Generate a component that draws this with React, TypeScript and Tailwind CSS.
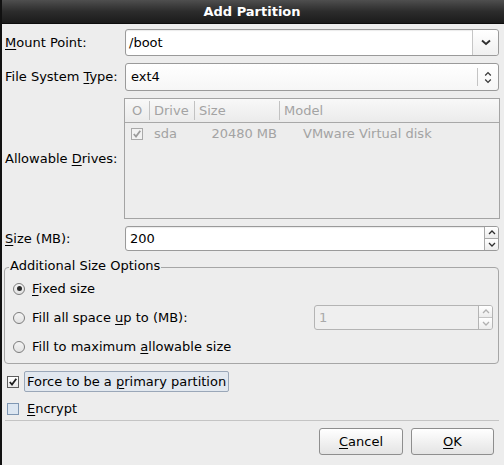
import React from "react";

const U = ({ c }: { c: string }) => (
  <span className="underline underline-offset-[2px] decoration-[1px]">{c}</span>
);

function ChevronDown({ color = "#2e2e2e" }: { color?: string }) {
  return (
    <svg width="10" height="7" viewBox="0 0 10 7">
      <polyline points="1,1.5 5,5 9,1.5" fill="none" stroke={color} strokeWidth="1.9" />
    </svg>
  );
}

function UpDown({ color = "#3a3a3a" }: { color?: string }) {
  return (
    <svg width="8" height="13" viewBox="0 0 8 13">
      <polyline points="1.2,4.5 4,1.6 6.8,4.5" fill="none" stroke={color} strokeWidth="1.3" />
      <polyline points="1.2,8.5 4,11.4 6.8,8.5" fill="none" stroke={color} strokeWidth="1.3" />
    </svg>
  );
}

function SmallUp({ color }: { color: string }) {
  return (
    <svg width="8" height="5" viewBox="0 0 8 5">
      <polyline points="1,4 4,1 7,4" fill="none" stroke={color} strokeWidth="1.3" />
    </svg>
  );
}
function SmallDown({ color }: { color: string }) {
  return (
    <svg width="8" height="5" viewBox="0 0 8 5">
      <polyline points="1,1 4,4 7,1" fill="none" stroke={color} strokeWidth="1.3" />
    </svg>
  );
}

function Check({ color }: { color: string }) {
  return (
    <svg width="10" height="10" viewBox="0 0 10 10">
      <polyline points="1.8,5 4,7.6 8.3,1.8" fill="none" stroke={color} strokeWidth="1.8" />
    </svg>
  );
}

function SpinButtons({ color, disabled }: { color: string; disabled?: boolean }) {
  return (
    <div className={`w-[14px] h-full flex flex-col border-l ${disabled ? "border-[#b4b4b4]" : "border-[#a8a8a8]"}`}>
      <div className="flex-1 flex items-center justify-center bg-gradient-to-b from-white to-[#ececec]">
        <SmallUp color={color} />
      </div>
      <div className={`h-px ${disabled ? "bg-[#c4c4c4]" : "bg-[#a8a8a8]"}`} />
      <div className="flex-1 flex items-center justify-center bg-gradient-to-b from-white to-[#ececec]">
        <SmallDown color={color} />
      </div>
    </div>
  );
}

function Radio({ checked }: { checked?: boolean }) {
  return (
    <div className="w-[12px] h-[12px] rounded-full border border-[#7c7c7c] bg-gradient-to-b from-[#f4f4f4] to-[#e2e2e2] flex items-center justify-center shrink-0">
      {checked && <div className="w-[5px] h-[5px] rounded-full bg-[#2b2b2b]" />}
    </div>
  );
}

export default function App() {
  return (
    <div className="w-[504px] h-[465px] bg-[#ededed] flex flex-col text-[13px] leading-[16px] text-black border-l-2 border-[#111] overflow-hidden font-['DejaVu_Sans','Liberation_Sans',sans-serif]">
      {/* Title bar */}
      <div className="h-[24px] -ml-[2px] w-[504px] bg-gradient-to-b from-[#4f4f4f] via-[#2c2c2c] to-[#1b1b1b] border-b border-[#0d0d0d] flex items-center justify-center shrink-0">
        <span className="text-white font-bold text-[13px] pt-[1px]">Add Partition</span>
      </div>

      <div className="flex flex-col pl-[3px] pr-[5px]">
        {/* Mount point */}
        <div className="mt-[5px] h-[27px] flex items-center">
          <div className="w-[120px]">
            <U c="M" />ount Point:
          </div>
          <div className="flex-1 h-full flex bg-white border border-[#9a9a9a] rounded-[3px] shadow-[inset_0_1px_1px_rgba(0,0,0,0.08)]">
            <div className="flex-1 flex items-center pl-[3px]">/boot</div>
            <div className="w-[26px] border-l border-[#c6c6c6] flex items-center justify-center bg-gradient-to-b from-white to-[#f0f0f0] rounded-r-[3px]">
              <ChevronDown />
            </div>
          </div>
        </div>

        {/* File system type */}
        <div className="mt-[7px] h-[28px] flex items-center">
          <div className="w-[120px]">
            File System <U c="T" />ype:
          </div>
          <div className="flex-1 h-full flex items-center bg-gradient-to-b from-white to-[#f6f6f6] border border-[#9a9a9a] rounded-[3px]">
            <div className="flex-1 pl-[5px]">ext4</div>
            <div className="h-[18px] w-px bg-[#c4c4c4]" />
            <div className="w-[20px] flex items-center justify-center">
              <UpDown />
            </div>
          </div>
        </div>

        {/* Allowable drives */}
        <div className="mt-[7px] h-[121px] flex items-center">
          <div className="w-[119px]">
            Allowable <U c="D" />rives:
          </div>
          <div className="flex-1 -mr-px h-full border border-[#a4a4a4] bg-[#ededed] flex flex-col text-[#a3a3a3]">
            <div className="h-[24px] flex bg-gradient-to-b from-[#f8f8f8] to-[#ebebeb] border-b border-[#a8a8a8]">
              <div className="w-[24px] flex items-center justify-center">O</div>
              <div className="w-px my-[2px] bg-[#c2c2c2]" />
              <div className="w-[44px] flex items-center pl-[4px]">Drive</div>
              <div className="w-px my-[2px] bg-[#c2c2c2]" />
              <div className="w-[84px] flex items-center pl-[4px]">Size</div>
              <div className="w-px my-[2px] bg-[#c2c2c2]" />
              <div className="flex-1 flex items-center pl-[4px]">Model</div>
            </div>
            <div className="h-[22px] flex items-center">
              <div className="w-[25px] flex items-center pl-[6px]">
                <div className="w-[12px] h-[12px] border border-[#a9a9a9] bg-[#f2f2f2] flex items-center justify-center">
                  <Check color="#9c9c9c" />
                </div>
              </div>
              <div className="w-[45px] pl-[4px]">sda</div>
              <div className="w-[86px] text-right pr-[4px]">20480 MB</div>
              <div className="flex-1 pl-[22px]">VMware Virtual disk</div>
            </div>
          </div>
        </div>

        {/* Size */}
        <div className="mt-[7px] h-[25px] flex items-center">
          <div className="w-[120px]">
            <U c="S" />ize (MB):
          </div>
          <div className="flex-1 h-full flex bg-white border border-[#9a9a9a] rounded-[3px] overflow-hidden shadow-[inset_0_1px_1px_rgba(0,0,0,0.08)]">
            <div className="flex-1 flex items-center pl-[4px]">200</div>
            <SpinButtons color="#2e2e2e" />
          </div>
        </div>

        {/* Additional size options */}
        <div className="mt-[16px] -ml-px h-[97px] relative border border-[#a6a6a6] rounded-[4px] pt-[6px] pl-[8px] pr-[5px]">
          <div className="absolute left-[4px] -top-[10px] px-[1px] bg-[#ededed] leading-[16px]">
            Additional Size Options
          </div>
          <div className="h-[29px] flex items-center gap-[7px]">
            <Radio checked />
            <span>
              <U c="F" />ixed size
            </span>
          </div>
          <div className="h-[29px] flex items-center gap-[7px]">
            <Radio />
            <span>
              Fill all space <U c="u" />p to (MB):
            </span>
            <div className="ml-auto w-[179px] h-[25px] flex border border-[#b4b4b4] rounded-[3px] bg-[#efefef] overflow-hidden text-[#a9a9a9]">
              <div className="flex-1 flex items-center pl-[4px]">1</div>
              <SpinButtons color="#b0b0b0" disabled />
            </div>
          </div>
          <div className="h-[29px] flex items-center gap-[7px]">
            <Radio />
            <span>
              Fill to maximum <U c="a" />llowable size
            </span>
          </div>
        </div>

        {/* Force primary */}
        <div className="mt-[7px] h-[21px] flex items-center">
          <div className="ml-[2px] w-[12px] h-[12px] border border-[#5d5d5d] bg-gradient-to-b from-white to-[#e8e8e8] flex items-center justify-center">
            <Check color="#1e1e1e" />
          </div>
          <div className="ml-[5px] h-full flex items-center px-[2px] border border-[#9aa7b8] rounded-[2px] bg-[#e2e8ef]">
            <span>
              Force to be a <U c="p" />rimary partition
            </span>
          </div>
        </div>

        {/* Encrypt */}
        <div className="mt-[6px] h-[21px] flex items-center">
          <div className="ml-[2px] w-[12px] h-[12px] border border-[#7f97b3] bg-[#dce6f1]" />
          <div className="ml-[8px]">
            <U c="E" />ncrypt
          </div>
        </div>

        {/* Separator */}
        <div className="mt-px h-px bg-[#c4c4c4]" />

        {/* Buttons */}
        <div className="mt-[7px] flex justify-end gap-[8px]">
          <button className="w-[84px] h-[27px] border border-[#8e8e8e] rounded-[3px] bg-gradient-to-b from-white to-[#e4e4e4] flex items-center justify-center">
            <span>
              <U c="C" />ancel
            </span>
          </button>
          <button className="w-[83px] h-[27px] mr-[5px] border border-[#8e8e8e] rounded-[3px] bg-gradient-to-b from-white to-[#e4e4e4] flex items-center justify-center">
            <span>
              <U c="O" />K
            </span>
          </button>
        </div>
      </div>
    </div>
  );
}
